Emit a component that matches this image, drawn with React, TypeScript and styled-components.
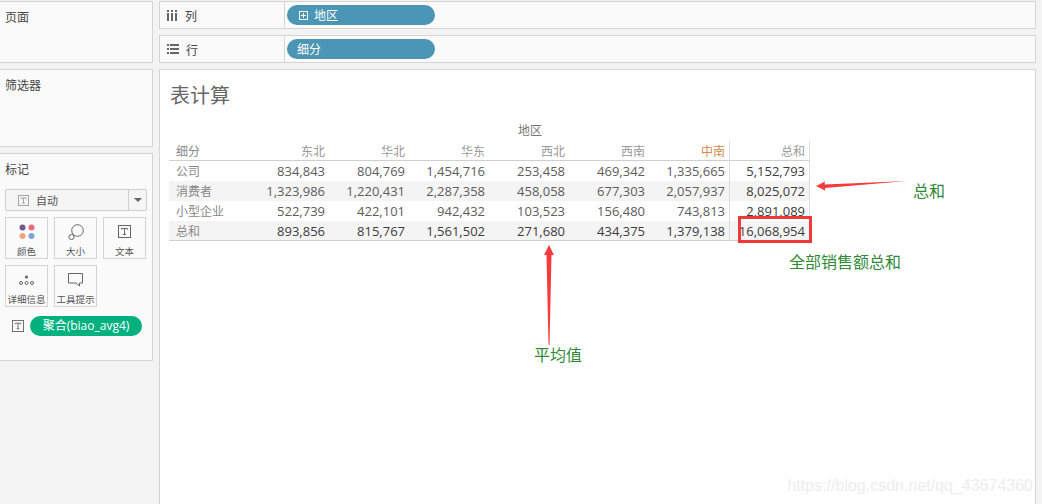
import React from 'react';
import styled, { createGlobalStyle } from 'styled-components';

const CJK = `"Noto Sans CJK SC", sans-serif`;
const NUM = `"Open Sans", "Noto Sans CJK SC", sans-serif`;

const GlobalStyle = createGlobalStyle`
  html, body { margin: 0; padding: 0; background: #f3f3f3; }
  body { width: 1042px; height: 504px; overflow: hidden; font-family: ${CJK}; }
`;

const Page = styled.div`
  display: grid;
  grid-template-columns: 153px 877px;
  column-gap: 6px;
  width: 1042px;
  height: 504px;
  padding-top: 1px;
  box-sizing: border-box;
`;

const Side = styled.div`
  display: flex;
  flex-direction: column;
  gap: 6px;
`;

const Panel = styled.section<{ $h: number }>`
  height: ${p => p.$h}px;
  box-sizing: border-box;
  background: #fafafa;
  border: 1px solid #d4d4d4;
  border-left: none;
  padding: 7px 5px;
`;

const PanelTitle = styled.div`
  font-size: 12px;
  line-height: 16px;
  color: #444;
`;

const MarkSelect = styled.div`
  display: flex;
  align-items: center;
  height: 22px;
  box-sizing: border-box;
  margin-top: 12px;
  border: 1px solid #cfcfcf;
  border-radius: 2px;
  background: #f5f5f5;
  font-size: 11px;
  color: #555;
`;

const SelectLabel = styled.div`
  flex: 1;
  display: flex;
  align-items: center;
  gap: 7px;
  padding-left: 12px;
`;

const SelectCaret = styled.div`
  width: 17px;
  height: 100%;
  border-left: 1px solid #cfcfcf;
  display: flex;
  align-items: center;
  justify-content: center;
  &::after {
    content: '';
    border-left: 4px solid transparent;
    border-right: 4px solid transparent;
    border-top: 4px solid #666;
  }
`;

const MarkGrid = styled.div`
  display: grid;
  grid-template-columns: repeat(3, 43px);
  grid-auto-rows: 42px;
  column-gap: 6px;
  row-gap: 6px;
  margin-top: 6px;
`;

const MarkButton = styled.div`
  box-sizing: border-box;
  border: 1px solid #d4d4d4;
  background: #fafafa;
  display: flex;
  flex-direction: column;
  align-items: center;
  font-size: 9.5px;
  line-height: 12px;
  color: #555;
  white-space: nowrap;
`;

const MarkIcon = styled.div`
  height: 27px;
  display: flex;
  align-items: center;
  justify-content: center;
`;

const PillRow = styled.div`
  display: flex;
  align-items: center;
  gap: 6px;
  margin-top: 9px;
  padding-left: 7px;
`;

const MeasurePill = styled.div`
  width: 112px;
  height: 20px;
  border-radius: 10px;
  background: #00b180;
  color: #fff;
  font-family: ${NUM};
  font-size: 12px;
  line-height: 20px;
  text-align: center;
  white-space: nowrap;
`;

const Content = styled.div`
  display: flex;
  flex-direction: column;
  gap: 6px;
`;

const Shelf = styled.div`
  display: flex;
  height: 28px;
  box-sizing: border-box;
  background: #fafafa;
  border: 1px solid #d4d4d4;
`;

const ShelfLabel = styled.div`
  width: 125px;
  box-sizing: border-box;
  display: flex;
  align-items: center;
  gap: 7px;
  padding-left: 7px;
  border-right: 1px solid #d4d4d4;
  font-size: 12px;
  color: #444;
`;

const ShelfBody = styled.div`
  flex: 1;
  display: flex;
  align-items: center;
  padding-left: 2px;
`;

const DimPill = styled.div<{ $pad: number }>`
  width: 148px;
  height: 20px;
  box-sizing: border-box;
  border-radius: 10px;
  background: #4a96b4;
  color: #fff;
  font-size: 12px;
  line-height: 20px;
  display: flex;
  align-items: center;
  gap: 6px;
  padding-left: ${p => p.$pad}px;
`;

const Sheet = styled.main`
  position: relative;
  flex: 1;
  background: #fff;
  border: 1px solid #d4d4d4;
  border-bottom: none;
  padding: 11px 0 0 9px;
`;

const SheetTitle = styled.h1`
  margin: 0 0 0 1px;
  font-size: 20px;
  line-height: 28px;
  font-weight: 400;
  color: #666;
`;

const Crosstab = styled.div`
  width: 641px;
  margin-top: 12px;
`;

const AxisTitle = styled.div`
  height: 20px;
  padding-left: 349px;
  font-size: 12px;
  line-height: 17px;
  color: #777;
`;

const Row = styled.div<{ $shade?: boolean; $head?: boolean; $strong?: boolean }>`
  display: grid;
  grid-template-columns: 80px repeat(6, 80px) 81px;
  height: 20px;
  box-sizing: border-box;
  background: ${p => (p.$shade ? '#f4f4f4' : 'transparent')};
  border-bottom: ${p => (p.$head || p.$strong ? '1px solid #cfcfcf' : 'none')};
`;

const RowLabel = styled.div`
  padding-left: 7px;
  font-size: 12px;
  line-height: 20px;
  color: #888;
`;

const HeadCell = styled.div<{ $accent?: boolean; $total?: boolean }>`
  padding-right: 4px;
  text-align: right;
  font-size: 12px;
  line-height: 20px;
  color: ${p => (p.$accent ? '#d08a4c' : '#999')};
  ${p => p.$total && 'border-left: 1px solid #dcdcdc; border-right: 1px solid #dcdcdc;'}
`;

const Cell = styled.div<{ $total?: boolean; $strong?: boolean }>`
  padding-right: 4px;
  text-align: right;
  font-family: ${NUM};
  font-size: 13px;
  line-height: 20px;
  white-space: nowrap;
  color: ${p => (p.$total || p.$strong ? '#3c3c3c' : '#5c5c5c')};
  font-weight: ${p => (p.$total || p.$strong ? 500 : 400)};
  ${p => p.$total && 'border-left: 1px solid #dcdcdc; border-right: 1px solid #dcdcdc;'}
`;

const Note = styled.div<{ $x: number; $y: number }>`
  position: absolute;
  left: ${p => p.$x}px;
  top: ${p => p.$y}px;
  font-size: 16px;
  line-height: 20px;
  color: #2f8a36;
  white-space: nowrap;
`;

const Overlay = styled.svg`
  position: absolute;
  left: -160px;
  top: -70px;
  width: 1042px;
  height: 504px;
  pointer-events: none;
`;

const Watermark = styled.div`
  position: absolute;
  right: 2px;
  bottom: 8px;
  font-family: "Liberation Sans", sans-serif;
  font-size: 16px;
  line-height: 20px;
  color: #ededed;
`;

const TextIcon = ({ size = 13, color = '#666' }: { size?: number; color?: string }) => (
  <svg width={size} height={size} viewBox="0 0 13 13" fill="none">
    <rect x="0.5" y="0.5" width="12" height="12" stroke={color} />
    <path d="M3.5 3.5h6M6.5 3.5v6M5 9.5h3M3.5 3.5v1.2M9.5 3.5v1.2" stroke={color} />
  </svg>
);

const ColumnsIcon = () => (
  <svg width="11" height="11" viewBox="0 0 11 11" fill="#666">
    <rect x="0" y="3" width="2" height="8" />
    <rect x="4" y="3" width="2" height="8" />
    <rect x="8" y="3" width="2" height="8" />
    <rect x="0" y="0" width="2" height="2" />
    <rect x="4" y="0" width="2" height="2" />
    <rect x="8" y="0" width="2" height="2" />
  </svg>
);

const RowsIcon = () => (
  <svg width="12" height="11" viewBox="0 0 12 11" fill="#666">
    <rect x="0" y="0" width="2" height="2" />
    <rect x="0" y="4" width="2" height="2" />
    <rect x="0" y="8" width="2" height="2" />
    <rect x="3" y="0" width="9" height="2" />
    <rect x="3" y="4" width="9" height="2" />
    <rect x="3" y="8" width="9" height="2" />
  </svg>
);

const ColorIcon = () => (
  <svg width="16" height="16" viewBox="0 0 16 16">
    <circle cx="3.5" cy="3.5" r="3" fill="#76598f" />
    <circle cx="12.5" cy="3.5" r="3" fill="#ef6a80" />
    <circle cx="3.5" cy="12" r="3" fill="#f3a47a" />
    <circle cx="12.5" cy="12" r="3" fill="#7fa4cf" />
  </svg>
);

const SizeIcon = () => (
  <svg width="16" height="16" viewBox="0 0 16 16" fill="#fafafa" stroke="#666">
    <circle cx="9.5" cy="6.5" r="5.8" />
    <circle cx="3.5" cy="13" r="2.6" />
  </svg>
);

const DetailIcon = () => (
  <svg width="15" height="10" viewBox="0 0 15 10" fill="none" stroke="#666">
    <circle cx="7.5" cy="2" r="1.6" fill="#666" stroke="none" />
    <circle cx="2" cy="8" r="1.5" />
    <circle cx="7.5" cy="8" r="1.5" />
    <circle cx="13" cy="8" r="1.5" />
  </svg>
);

const TipIcon = () => (
  <svg width="15" height="14" viewBox="0 0 15 14" fill="none" stroke="#666">
    <path d="M0.5 0.5h14v9.5h-3v3l-3.5-3h-7.5z" />
  </svg>
);

const PlusBox = () => (
  <svg width="9" height="9" viewBox="0 0 9 9" fill="none" stroke="#fff">
    <rect x="0.5" y="0.5" width="8" height="8" />
    <path d="M2 4.5h5M4.5 2v5" />
  </svg>
);

const regions = [
  { name: '东北' },
  { name: '华北' },
  { name: '华东' },
  { name: '西北' },
  { name: '西南' },
  { name: '中南', accent: true },
];

const rows = [
  { label: '公司', values: ['834,843', '804,769', '1,454,716', '253,458', '469,342', '1,335,665'], total: '5,152,793' },
  { label: '消费者', values: ['1,323,986', '1,220,431', '2,287,358', '458,058', '677,303', '2,057,937'], total: '8,025,072', shade: true },
  { label: '小型企业', values: ['522,739', '422,101', '942,432', '103,523', '156,480', '743,813'], total: '2,891,089' },
  { label: '总和', values: ['893,856', '815,767', '1,561,502', '271,680', '434,375', '1,379,138'], total: '16,068,954', shade: true, strong: true },
];

export default function App() {
  return (
    <>
      <GlobalStyle />
      <Page>
        <Side>
          <Panel $h={62}>
            <PanelTitle>页面</PanelTitle>
          </Panel>
          <Panel $h={78}>
            <PanelTitle>筛选器</PanelTitle>
          </Panel>
          <Panel $h={208}>
            <PanelTitle>标记</PanelTitle>
            <MarkSelect>
              <SelectLabel>
                <TextIcon size={11} color="#999" />
                自动
              </SelectLabel>
              <SelectCaret />
            </MarkSelect>
            <MarkGrid>
              <MarkButton>
                <MarkIcon><ColorIcon /></MarkIcon>
                颜色
              </MarkButton>
              <MarkButton>
                <MarkIcon><SizeIcon /></MarkIcon>
                大小
              </MarkButton>
              <MarkButton>
                <MarkIcon><TextIcon /></MarkIcon>
                文本
              </MarkButton>
              <MarkButton>
                <MarkIcon><DetailIcon /></MarkIcon>
                详细信息
              </MarkButton>
              <MarkButton>
                <MarkIcon><TipIcon /></MarkIcon>
                工具提示
              </MarkButton>
            </MarkGrid>
            <PillRow>
              <TextIcon size={12} />
              <MeasurePill>聚合(biao_avg4)</MeasurePill>
            </PillRow>
          </Panel>
        </Side>
        <Content>
          <Shelf>
            <ShelfLabel><ColumnsIcon /> 列</ShelfLabel>
            <ShelfBody>
              <DimPill $pad={12}><PlusBox /> 地区</DimPill>
            </ShelfBody>
          </Shelf>
          <Shelf>
            <ShelfLabel><RowsIcon /> 行</ShelfLabel>
            <ShelfBody>
              <DimPill $pad={10}>细分</DimPill>
            </ShelfBody>
          </Shelf>
          <Sheet>
            <SheetTitle>表计算</SheetTitle>
            <Crosstab>
              <AxisTitle>地区</AxisTitle>
              <Row $head>
                <RowLabel>细分</RowLabel>
                {regions.map(r => (
                  <HeadCell key={r.name} $accent={r.accent}>{r.name}</HeadCell>
                ))}
                <HeadCell $total>总和</HeadCell>
              </Row>
              {rows.map(r => (
                <Row key={r.label} $shade={r.shade} $strong={r.strong}>
                  <RowLabel>{r.label}</RowLabel>
                  {r.values.map((v, i) => (
                    <Cell key={i} $strong={r.strong}>{v}</Cell>
                  ))}
                  <Cell $total>{r.total}</Cell>
                </Row>
              ))}
            </Crosstab>
            <Overlay viewBox="0 0 1042 504">
              <rect x="739.5" y="217.5" width="71" height="24" fill="none" stroke="#f03a3a" strokeWidth="3" />
              <polygon points="816,186 825,181.5 824.5,184.5 907,181 825,188 825,190.5" fill="#f93a3a" />
              <polygon points="549,245 554,255 551.5,255 549.5,345 548.5,345 546.5,255 544,255" fill="#f93a3a" />
            </Overlay>
            <Note $x={753} $y={110}>总和</Note>
            <Note $x={629} $y={181}>全部销售额总和</Note>
            <Note $x={374} $y={274}>平均值</Note>
            <Watermark>https://blog.csdn.net/qq_43674360</Watermark>
          </Sheet>
        </Content>
      </Page>
    </>
  );
}
